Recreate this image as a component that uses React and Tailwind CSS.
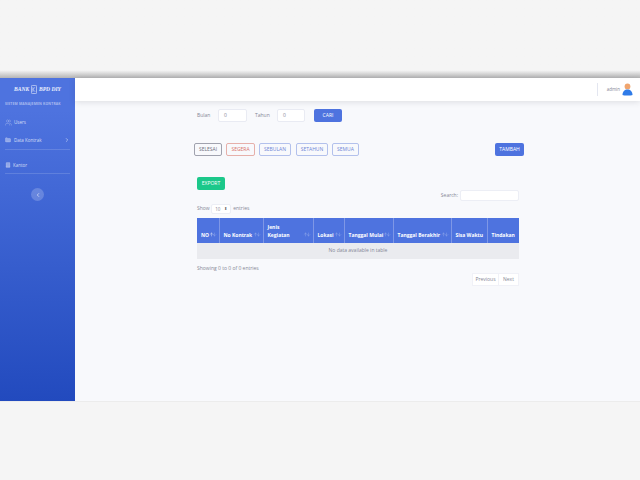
import React from 'react';
import { ChevronLeft, ChevronRight, Folder, Book, Users, ArrowUp, ArrowDown } from 'lucide-react';

const columns = [
  { label: 'NO', width: 'w-[22px]', sort: true, active: true },
  { label: 'No Kontrak', width: 'w-[44px]', sort: true },
  { label: 'Jenis\nKegiatan', width: 'w-[50px]', sort: true },
  { label: 'Lokasi', width: 'w-[31px]', sort: true },
  { label: 'Tanggal Mulai', width: 'w-[49px]', sort: true },
  { label: 'Tanggal Berakhir', width: 'w-[58px]', sort: true },
  { label: 'Sisa Waktu', width: 'w-[36px]' },
  { label: 'Tindakan', width: 'w-[32px]' },
];

const filters = [
  { label: 'SELESAI', cls: 'w-[28px] border-[#a0a2ae] text-[#6e707e]' },
  { label: 'SEGERA', cls: 'w-[29px] ml-[4px] border-[#e6b0aa] text-[#d9736a]' },
  { label: 'SEBULAN', cls: 'w-[32px] ml-[4px] border-[#b3c1ec] text-[#6f86d6]' },
  { label: 'SETAHUN', cls: 'w-[32px] ml-[5px] border-[#b3c1ec] text-[#6f86d6]' },
  { label: 'SEMUA', cls: 'w-[27px] ml-[4px] border-[#b3c1ec] text-[#6f86d6]' },
];

const SortArrows = ({ active }) => (
  <span className="absolute right-[2px] bottom-[6px] flex text-white/40">
    <ArrowUp size={5} strokeWidth={2} className={active ? 'text-white/90' : ''} />
    <ArrowDown size={5} strokeWidth={2} className="-ml-[2px]" />
  </span>
);

const NavItem = ({ icon, label, arrow, className }) => (
  <div className={`flex items-center text-[4.5px] text-white/75 ${className}`}>
    {icon}
    <span>{label}</span>
    {arrow && <ChevronRight size={6} strokeWidth={2.5} className="ml-auto mr-[5px] text-white/70" />}
  </div>
);

const Sidebar = () => (
  <aside className="w-[75px] shrink-0 bg-gradient-to-b from-[#4e73df] from-10% to-[#224abe] flex flex-col">
    <div className="h-[21px] flex items-center justify-center gap-[2px] text-white/90 font-['Liberation_Serif',serif] italic font-bold text-[5.5px] pt-[1px]">
      <span>BANK</span>
      <svg width="6" height="9" viewBox="0 0 6 9" fill="none">
        <rect x="0.4" y="0.4" width="5.2" height="8.2" rx="1" stroke="#dfe6fb" strokeWidth="0.7" />
        <path d="M1.9 2.2v4.6M1.9 4.4 4.2 2.2M1.9 4.4l2.3 2.4" stroke="#dfe6fb" strokeWidth="0.6" />
      </svg>
      <span>BPD DIY</span>
    </div>
    <div className="mt-[2px] pl-[5px] text-[3.4px] leading-[6px] tracking-[0.17px] font-bold text-white/50 whitespace-nowrap">
      SISTEM MANAJEMEN KONTRAK
    </div>
    <NavItem
      className="mt-[11px] pl-[5px] h-[8px]"
      icon={<Users size={7} strokeWidth={1.5} className="mr-[2px] text-white/50" />}
      label="Users"
    />
    <NavItem
      className="mt-[10px] pl-[5px] h-[8px]"
      icon={<Folder size={6} fill="currentColor" className="mr-[3px] text-white/40" />}
      label="Data Kontrak"
      arrow
    />
    <div className="mt-[5px] ml-[5px] mr-[5px] h-px bg-white/15" />
    <NavItem
      className="mt-[11px] pl-[5px] h-[8px]"
      icon={<Book size={6} fill="currentColor" strokeWidth={1.5} className="mr-[2px] text-white/40" />}
      label="Kantor"
    />
    <div className="mt-[4px] mx-[5px] h-px bg-white/15" />
    <button className="mt-[14px] mx-auto w-[13px] h-[13px] rounded-full bg-white/20 flex items-center justify-center">
      <ChevronLeft size={6} strokeWidth={3} className="text-white/70" />
    </button>
  </aside>
);

const Topbar = () => (
  <header className="h-[23px] bg-white shadow-[0_1px_6px_rgba(58,59,69,0.15)] flex items-center justify-end relative">
    <div className="w-px h-[13px] bg-[#e3e6f0] mr-[9px]" />
    <span className="text-[4.5px] text-[#858796] mr-[2px]">admin</span>
    <svg width="11" height="13" viewBox="0 0 11 13" className="mr-[7px] mb-[1px]">
      <circle cx="5.5" cy="3.4" r="2.9" fill="#f0a56e" />
      <path d="M0.5 12c0-3.6 2.2-5.6 5-5.6s5 2 5 5.6c-1.2.7-8.8.7-10 0z" fill="#2f7be8" />
    </svg>
  </header>
);

const DataTable = () => (
  <table className="w-[322px] table-fixed border-collapse text-[5px]">
    <thead>
      <tr className="h-[25px] bg-[#4e73df] text-white font-bold">
        {columns.map((c) => (
          <th
            key={c.label}
            className={`${c.width} relative border-x border-[#7e97e6] first:border-l-0 last:border-r-0 pl-[4px] pr-[1px] pb-[4px] align-bottom text-left text-[5px] leading-[8px] font-bold whitespace-pre-line`}
          >
            {c.label}
            {c.sort && <SortArrows active={c.active} />}
          </th>
        ))}
      </tr>
    </thead>
    <tbody>
      <tr className="h-[16px] bg-[#eaebef]">
        <td colSpan={8} className="text-center text-[#858796]">No data available in table</td>
      </tr>
    </tbody>
  </table>
);

export default function App() {
  return (
    <div className="w-[640px] h-[480px] overflow-hidden bg-[#f5f5f5] flex flex-col font-['Open_Sans','Noto_Sans',sans-serif]">
      <div className="h-[78px] shrink-0 bg-gradient-to-b from-[#f5f5f5] from-90% to-[#b5b5b5]" />
      <div className="h-[324px] shrink-0 flex border-b border-[#ececec]">
        <Sidebar />
        <main className="flex-1 bg-[#f8f9fc] flex flex-col">
          <Topbar />

          <div className="mt-[8px] ml-[122px] h-[13px] flex items-center text-[5px] text-[#858796]">
            <span className="w-[21px]">Bulan</span>
            <div className="w-[29px] h-[13px] mr-[8px] bg-white border border-[#e9ebf3] rounded-[2px] pl-[5px] leading-[11px]">0</div>
            <span className="w-[22px]">Tahun</span>
            <div className="w-[28px] h-[13px] mr-[9px] bg-white border border-[#e9ebf3] rounded-[2px] pl-[5px] leading-[11px]">0</div>
            <button className="w-[28px] h-[13px] bg-[#4e73df] rounded-[2px] text-white">CARI</button>
          </div>

          <div className="mt-[21px] ml-[119px] w-[330px] h-[13px] flex items-center text-[5px]">
            {filters.map((f) => (
              <button key={f.label} className={`${f.cls} h-[13px] border rounded-[2px] bg-transparent`}>{f.label}</button>
            ))}
            <button className="ml-auto w-[29px] h-[13px] bg-[#4e73df] rounded-[2px] text-white">TAMBAH</button>
          </div>

          <div className="mt-[21px] ml-[122px] w-[322px] text-[5px] text-[#858796]">
            <button className="block w-[28px] h-[13px] bg-[#1cc88a] rounded-[2px] text-white">EXPORT</button>

            <div className="h-[11px] flex items-center justify-end">
              <span className="mr-[2px]">Search:</span>
              <div className="w-[59px] h-[11px] bg-white border border-[#eceef5] rounded-[2px]" />
            </div>

            <div className="mt-[2px] h-[12px] flex items-center">
              <span>Show</span>
              <div className="ml-[1.5px] mr-[2px] w-[20px] h-[10px] bg-white border border-[#eceef5] rounded-[2px] flex items-center justify-between px-[3px] text-[4.5px]">
                <span>10</span>
                <span className="text-[3.5px] text-[#555] leading-none">⬍</span>
              </div>
              <span>entries</span>
            </div>

            <div className="mt-[3px]">
              <DataTable />
            </div>

            <div className="mt-[6px] h-[6px] leading-[6px]">Showing 0 to 0 of 0 entries</div>

            <div className="mt-[2px] flex justify-end">
              <button className="w-[27px] h-[13px] bg-white border border-[#f0f1f7] text-[#858796]">Previous</button>
              <button className="w-[20px] h-[13px] bg-white border border-l-0 border-[#f0f1f7] text-[#858796]">Next</button>
            </div>
          </div>
        </main>
      </div>
    </div>
  );
}
